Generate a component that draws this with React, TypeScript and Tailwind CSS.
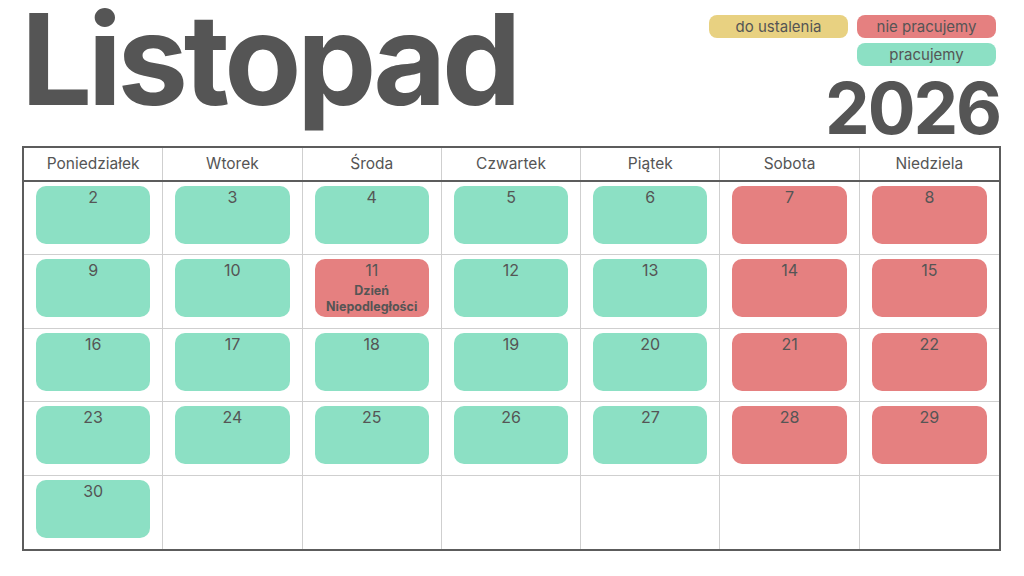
const days = ["Poniedziałek", "Wtorek", "Środa", "Czwartek", "Piątek", "Sobota", "Niedziela"];

type Day = { n: number; off: boolean; note?: string[] } | null;

function buildDays(): Day[] {
  const cells: Day[] = [];
  for (let n = 2; n <= 30; n++) {
    const col = (n - 2) % 7;
    const off = col >= 5 || n === 11;
    cells.push(n === 11 ? { n, off, note: ["Dzień", "Niepodległości"] } : { n, off });
  }
  while (cells.length < 35) cells.push(null);
  return cells;
}

function DayCell({ day, col, row }: { day: Day; col: number; row: number }) {
  const borders = [col < 6 ? "border-r" : "", row < 4 ? "border-b" : ""].join(" ");
  return (
    <div className={`${borders} border-[#cfcfcf] px-[12px] pt-[4px]`}>
      {day && (
        <div
          className={`flex h-[58px] flex-col items-center rounded-[10px] ${
            day.off ? "bg-[#e58080]" : "bg-[#8ce0c4]"
          }`}
        >
          <span className="text-[16px] leading-[22px] text-[#555]">{day.n}</span>
          {day.note && (
            <div className="mt-[2px] flex flex-col items-center text-[12.5px] font-bold leading-[16px] text-[#555]">
              {day.note.map((line) => (
                <span key={line}>{line}</span>
              ))}
            </div>
          )}
        </div>
      )}
    </div>
  );
}

export default function App() {
  const cells = buildDays();
  return (
    <div className="h-[576px] w-[1024px] overflow-hidden bg-white font-['Inter',sans-serif] text-[#555]">
      <div className="flex h-[146px] justify-between">
        <h1 className="ml-[21px] h-[146px] text-[126px] leading-[0.95] font-bold tracking-[-0.035em] text-[#555]">
          Listopad
        </h1>
        <div className="mr-[28px] flex flex-col items-end pt-[15px]">
          <div className="grid grid-cols-2 gap-x-[9px] gap-y-[5px] text-[15px] leading-[23px]">
            <span className="w-[139px] rounded-[8px] bg-[#e8d181] text-center">do ustalenia</span>
            <span className="w-[139px] rounded-[8px] bg-[#e58080] text-center">nie pracujemy</span>
            <span />
            <span className="w-[139px] rounded-[8px] bg-[#8ce0c4] text-center">pracujemy</span>
          </div>
          <div className="mr-[-4px] mt-[7px] text-[71px] leading-none font-bold tracking-[-0.03em]">2026</div>
        </div>
      </div>
      <div className="mx-[22px] flex h-[405px] w-[979px] flex-col border-2 border-[#5c5c5c]">
        <div className="grid h-[34px] grid-cols-7 border-b-2 border-[#5c5c5c]">
          {days.map((d, i) => (
            <div
              key={d}
              className={`flex items-center justify-center text-[15.5px] ${i < 6 ? "border-r border-[#cfcfcf]" : ""}`}
            >
              {d}
            </div>
          ))}
        </div>
        <div className="grid flex-1 grid-cols-7 grid-rows-5">
          {cells.map((day, i) => (
            <DayCell key={i} day={day} col={i % 7} row={Math.floor(i / 7)} />
          ))}
        </div>
      </div>
    </div>
  );
}
